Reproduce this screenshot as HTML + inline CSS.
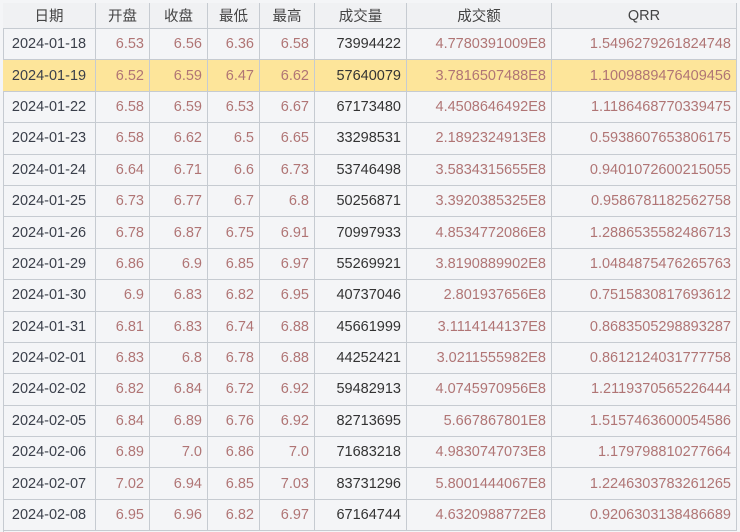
<!DOCTYPE html>
<html><head><meta charset="utf-8"><style>
html,body{margin:0;width:740px;height:532px;overflow:hidden;background:#f4f5f7;font-family:"Liberation Sans","Noto Sans CJK SC",sans-serif;font-size:14.5px}
.g{position:absolute;left:3px;top:3px;display:grid;grid-template-columns:93px 54px 58px 52px 55px 92px 145px 185px;grid-template-rows:26px repeat(16,31.4px)}
.g div{border-right:1px solid #c6cbd1;border-bottom:1px solid #c6cbd1;box-sizing:border-box;display:flex;align-items:center;justify-content:flex-end;padding-right:5px;color:#b07575;white-space:nowrap}
.g div.h{justify-content:center;padding:0;color:#444;background:#f0f1f3}
.g div.d{justify-content:center;padding:0;color:#3a3f4a}
.g div.v{color:#333}
.g div.y{background:#fde59a}
.wrap{position:absolute;left:3px;top:3px;width:734px;height:529px;border-left:1px solid #c6cbd1;border-top:1px solid #c6cbd1;box-sizing:border-box}
</style></head><body>
<div class="wrap"></div>
<div class="g">
<div class="h">日期</div><div class="h">开盘</div><div class="h">收盘</div><div class="h">最低</div><div class="h">最高</div><div class="h">成交量</div><div class="h">成交额</div><div class="h">QRR</div>
<div class="d">2024-01-18</div><div>6.53</div><div>6.56</div><div>6.36</div><div>6.58</div><div class="v">73994422</div><div>4.7780391009E8</div><div>1.5496279261824748</div>
<div class="d y">2024-01-19</div><div class="y">6.52</div><div class="y">6.59</div><div class="y">6.47</div><div class="y">6.62</div><div class="v y">57640079</div><div class="y">3.7816507488E8</div><div class="y">1.1009889476409456</div>
<div class="d">2024-01-22</div><div>6.58</div><div>6.59</div><div>6.53</div><div>6.67</div><div class="v">67173480</div><div>4.4508646492E8</div><div>1.1186468770339475</div>
<div class="d">2024-01-23</div><div>6.58</div><div>6.62</div><div>6.5</div><div>6.65</div><div class="v">33298531</div><div>2.1892324913E8</div><div>0.5938607653806175</div>
<div class="d">2024-01-24</div><div>6.64</div><div>6.71</div><div>6.6</div><div>6.73</div><div class="v">53746498</div><div>3.5834315655E8</div><div>0.9401072600215055</div>
<div class="d">2024-01-25</div><div>6.73</div><div>6.77</div><div>6.7</div><div>6.8</div><div class="v">50256871</div><div>3.3920385325E8</div><div>0.9586781182562758</div>
<div class="d">2024-01-26</div><div>6.78</div><div>6.87</div><div>6.75</div><div>6.91</div><div class="v">70997933</div><div>4.8534772086E8</div><div>1.2886535582486713</div>
<div class="d">2024-01-29</div><div>6.86</div><div>6.9</div><div>6.85</div><div>6.97</div><div class="v">55269921</div><div>3.8190889902E8</div><div>1.0484875476265763</div>
<div class="d">2024-01-30</div><div>6.9</div><div>6.83</div><div>6.82</div><div>6.95</div><div class="v">40737046</div><div>2.801937656E8</div><div>0.7515830817693612</div>
<div class="d">2024-01-31</div><div>6.81</div><div>6.83</div><div>6.74</div><div>6.88</div><div class="v">45661999</div><div>3.1114144137E8</div><div>0.8683505298893287</div>
<div class="d">2024-02-01</div><div>6.83</div><div>6.8</div><div>6.78</div><div>6.88</div><div class="v">44252421</div><div>3.0211555982E8</div><div>0.8612124031777758</div>
<div class="d">2024-02-02</div><div>6.82</div><div>6.84</div><div>6.72</div><div>6.92</div><div class="v">59482913</div><div>4.0745970956E8</div><div>1.2119370565226444</div>
<div class="d">2024-02-05</div><div>6.84</div><div>6.89</div><div>6.76</div><div>6.92</div><div class="v">82713695</div><div>5.667867801E8</div><div>1.5157463600054586</div>
<div class="d">2024-02-06</div><div>6.89</div><div>7.0</div><div>6.86</div><div>7.0</div><div class="v">71683218</div><div>4.9830747073E8</div><div>1.179798810277664</div>
<div class="d">2024-02-07</div><div>7.02</div><div>6.94</div><div>6.85</div><div>7.03</div><div class="v">83731296</div><div>5.8001444067E8</div><div>1.2246303783261265</div>
<div class="d">2024-02-08</div><div>6.95</div><div>6.96</div><div>6.82</div><div>6.97</div><div class="v">67164744</div><div>4.6320988772E8</div><div>0.9206303138486689</div>
</div>
</body></html>
